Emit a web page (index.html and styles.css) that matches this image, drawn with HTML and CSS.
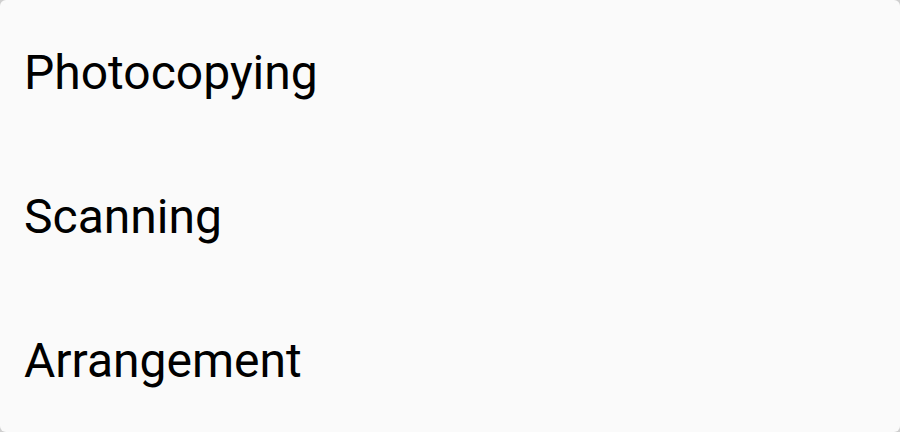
FILE: index.html
```html
<!DOCTYPE html>
<html>
<head>
<meta charset="utf-8">
<link rel="stylesheet" href="styles.css">
</head>
<body>
<ul class="menu">
  <li class="item">Photocopying</li>
  <li class="item">Scanning</li>
  <li class="item">Arrangement</li>
</ul>
</body>
</html>
```

FILE: styles.css
```css
html, body {
  margin: 0;
  padding: 0;
  background: #cfcfcf;
}
.menu {
  list-style: none;
  margin: 0;
  padding: 0;
  width: 900px;
  height: 432px;
  background: #fafafa;
  border-radius: 6px;
  overflow: hidden;
  display: flex;
  flex-direction: column;
}
.item {
  height: 144px;
  display: flex;
  align-items: center;
  padding-left: 24px;
  font-family: Roboto, "Noto Sans", sans-serif;
  font-size: 48px;
  color: #000;
}
```
